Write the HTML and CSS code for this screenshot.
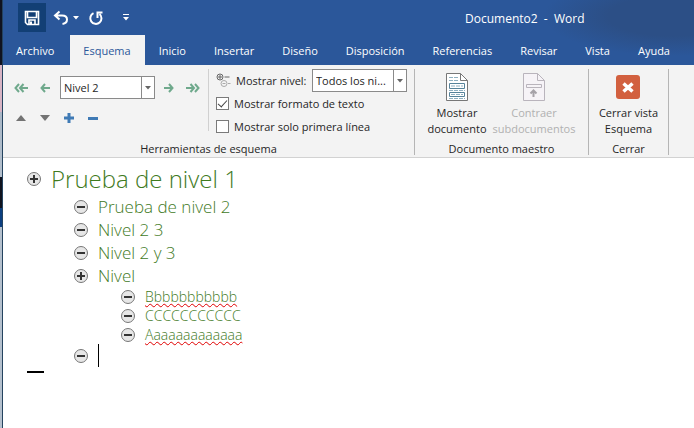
FILE: index.html
```html
<!DOCTYPE html>
<html lang="es">
<head>
	<meta charset="UTF-8">
	<meta name="viewport" content="width=device-width, initial-scale=1.0">
	<title>Documento2 - Word</title>
	<link rel="stylesheet" href="styles.css">
</head>
<body>

	<div class="escritorio"></div>

	<div class="ventana">
		<header class="cabecera">
			<div class="barraTitulo">
				<div class="accesoRapido">
					<button type="button" class="guardar" aria-label="Guardar">
						<svg width="16" height="16" viewBox="0 0 16 16"><path d="M1.5 1.5h13v13h-11l-2-2z M3.5 2v5.500h9V2 M5 14v-4h6v4" fill="none" stroke="#fff" stroke-width="1.6"/><path d="M6 11.500h2V14H6z" fill="#fff"/></svg>
					</button>
					<button type="button" class="deshacer" aria-label="Deshacer">
						<svg width="16" height="16" viewBox="0 0 16 16"><path d="M6.500 1.500L2 5.500l4.500 4M2.500 5.500h6.500c3 0 5 1.500 5 4 0 2.300-1.600 4-4.500 4.500" fill="none" stroke="#fff" stroke-width="2"/></svg>
						<svg width="6" height="4" viewBox="0 0 6 4"><path d="M0 0h6L3 3.500z" fill="#fff"/></svg>
					</button>
					<button type="button" class="repetir" aria-label="Repetir">
						<svg width="16" height="16" viewBox="0 0 16 16"><path d="M5.500 3.200A5.600 5.600 0 1 0 11.500 4M9.500 8V2.500h5" fill="none" stroke="#fff" stroke-width="2"/></svg>
					</button>
					<button type="button" class="personalizar" aria-label="Personalizar barra">
						<svg width="6" height="7" viewBox="0 0 6 7"><path d="M0 0h6v1H0zM0 3h6L3 6.500z" fill="#fff"/></svg>
					</button>
				</div>
				<span class="titulo">Documento2&nbsp; -&nbsp; Word</span>
			</div>
			<nav class="pestanas">
				<a href="#archivo" class="archivo">Archivo</a>
				<a href="#esquema" class="activa">Esquema</a>
				<a href="#inicio">Inicio</a>
				<a href="#insertar">Insertar</a>
				<a href="#diseno">Diseño</a>
				<a href="#disposicion">Disposición</a>
				<a href="#referencias">Referencias</a>
				<a href="#revisar">Revisar</a>
				<a href="#vista">Vista</a>
				<a href="#ayuda">Ayuda</a>
			</nav>
		</header>

		<section class="cinta">
			<div class="grupo herramientas">
				<div class="grupoCuerpo">
					<div class="niveles">
						<div class="fila filaNivel">
							<button type="button" aria-label="Aumentar a Título 1">
								<svg width="14" height="10" viewBox="0 0 14 10"><path d="M5 1L1.500 5 5 9M9.500 1L6 5l3.500 4M6 5h8" fill="none" stroke="#6fa98c" stroke-width="2"/></svg>
							</button>
							<button type="button" aria-label="Aumentar nivel">
								<svg width="10" height="10" viewBox="0 0 10 10"><path d="M5 1L1.500 5 5 9M2 5h8" fill="none" stroke="#6fa98c" stroke-width="2"/></svg>
							</button>
							<span class="lista listaNivel">
								<select aria-label="Nivel de esquema">
									<option>Nivel 2</option>
								</select>
								<svg class="flecha" width="6" height="4" viewBox="0 0 6 4"><path d="M0 0h6L3 3.500z" fill="#666"/></svg>
							</span>
							<button type="button" aria-label="Disminuir nivel">
								<svg width="10" height="10" viewBox="0 0 10 10"><path d="M5 1l3.500 4L5 9M8 5H0" fill="none" stroke="#6fa98c" stroke-width="2"/></svg>
							</button>
							<button type="button" aria-label="Disminuir a texto">
								<svg width="14" height="10" viewBox="0 0 14 10"><path d="M4.500 1L8 5 4.500 9M9 1l3.500 4L9 9M8 5H0" fill="none" stroke="#6fa98c" stroke-width="2"/></svg>
							</button>
						</div>
						<div class="fila">
							<button type="button" aria-label="Subir">
								<svg width="10" height="6" viewBox="0 0 10 6"><path d="M0 6h10L5 0z" fill="#737373"/></svg>
							</button>
							<button type="button" aria-label="Bajar">
								<svg width="10" height="6" viewBox="0 0 10 6"><path d="M0 0h10L5 6z" fill="#737373"/></svg>
							</button>
							<button type="button" aria-label="Expandir">
								<svg width="10" height="10" viewBox="0 0 10 10"><path d="M5 0v10M0 5h10" stroke="#3f7ab5" stroke-width="3"/></svg>
							</button>
							<button type="button" aria-label="Contraer">
								<svg width="10" height="10" viewBox="0 0 10 10"><path d="M0 5.500h10" stroke="#3f7ab5" stroke-width="3"/></svg>
							</button>
						</div>
					</div>
					<div class="opciones">
						<div class="opcion">
							<svg width="15" height="15" viewBox="0 0 15 15"><g fill="none" stroke="#666"><circle cx="4" cy="4" r="3"/><path d="M4 2v4M2 4h4M8.500 4h5"/><g stroke="#aaa"><circle cx="8" cy="10.500" r="3"/><path d="M6.500 10.500h3M12 10.500h2.500"/></g></g></svg>
							<label for="mostrarNivel">Mostrar nivel:</label>
							<span class="lista listaMostrar">
								<select id="mostrarNivel">
									<option>Todos los ni...</option>
								</select>
								<svg class="flecha" width="6" height="4" viewBox="0 0 6 4"><path d="M0 0h6L3 3.500z" fill="#666"/></svg>
							</span>
						</div>
						<div class="opcion">
							<input type="checkbox" id="formato" checked>
							<label for="formato">Mostrar formato de texto</label>
						</div>
						<div class="opcion">
							<input type="checkbox" id="primera">
							<label for="primera">Mostrar solo primera línea</label>
						</div>
					</div>
				</div>
				<div class="grupoNombre">Herramientas de esquema</div>
			</div>

			<div class="grupo maestro">
				<div class="grupoCuerpo">
					<button type="button" class="grande">
						<svg width="22" height="28" viewBox="0 0 22 28"><path d="M.5.500h14l7 7v20H.500z" fill="#fff" stroke="#777"/><path d="M14.500.500v7h7" fill="none" stroke="#777"/><g fill="none" stroke="#56839a"><path d="M3.500 10.500h15v5h-15zM3.500 19.500h15v4h-15z"/><path d="M3 4.500h9M3 7.500h9M3 17.500h16M3 25.500h16M5 13h12M5 21.500h12" stroke-dasharray="4 1" stroke="#8fb0c0"/></g></svg>
						<span>Mostrar<br>documento</span>
					</button>
					<button type="button" class="grande" disabled>
						<svg width="22" height="28" viewBox="0 0 22 28"><g fill="none" stroke="#b9b4bc"><path d="M.5.500h14l7 7v20H.500z" fill="#f6f3f7"/><path d="M14.500.500v7h7M3.500 11.500h15v3h-15z"/><path d="M10.500 24v-6M7.500 20.500l3-3 3 3" stroke="#a6a2a8" stroke-width="2"/></g></svg>
						<span>Contraer<br>subdocumentos</span>
					</button>
				</div>
				<div class="grupoNombre">Documento maestro</div>
			</div>

			<div class="grupo cerrar">
				<div class="grupoCuerpo">
					<button type="button" class="grande">
						<svg width="24" height="28" viewBox="0 0 24 28"><rect y="2" width="24" height="24" rx="3" fill="#d2603f"/><path d="M7.500 10.500l9 8M16.500 10.500l-9 8" stroke="#fff" stroke-width="3.500"/></svg>
						<span>Cerrar vista<br>Esquema</span>
					</button>
				</div>
				<div class="grupoNombre">Cerrar</div>
			</div>
		</section>

		<main class="documento">
			<ul class="nivel1">
				<li>
					<div class="linea">
						<svg class="marca" viewBox="0 0 14 14"><circle cx="7" cy="7" r="6.500"/><path d="M7 3v8M3 7h8"/></svg>
						<span>Prueba de nivel 1</span>
					</div>
					<ul class="nivel2">
						<li>
							<div class="linea">
								<svg class="marca" viewBox="0 0 14 14"><circle cx="7" cy="7" r="6.500"/><path d="M3 7h8"/></svg>
								<span>Prueba de nivel 2</span>
							</div>
						</li>
						<li>
							<div class="linea">
								<svg class="marca" viewBox="0 0 14 14"><circle cx="7" cy="7" r="6.500"/><path d="M3 7h8"/></svg>
								<span>Nivel 2 3</span>
							</div>
						</li>
						<li>
							<div class="linea">
								<svg class="marca" viewBox="0 0 14 14"><circle cx="7" cy="7" r="6.500"/><path d="M3 7h8"/></svg>
								<span>Nivel 2 y 3</span>
							</div>
						</li>
						<li>
							<div class="linea">
								<svg class="marca" viewBox="0 0 14 14"><circle cx="7" cy="7" r="6.500"/><path d="M7 3v8M3 7h8"/></svg>
								<span>Nivel</span>
							</div>
							<ul class="nivel3">
								<li>
									<div class="linea">
										<svg class="marca" viewBox="0 0 14 14"><circle cx="7" cy="7" r="6.500"/><path d="M3 7h8"/></svg>
										<span class="error">Bbbbbbbbbbb</span>
									</div>
								</li>
								<li>
									<div class="linea">
										<svg class="marca" viewBox="0 0 14 14"><circle cx="7" cy="7" r="6.500"/><path d="M3 7h8"/></svg>
										<span>CCCCCCCCCCC</span>
									</div>
								</li>
								<li>
									<div class="linea">
										<svg class="marca" viewBox="0 0 14 14"><circle cx="7" cy="7" r="6.500"/><path d="M3 7h8"/></svg>
										<span class="error">Aaaaaaaaaaaaa</span>
									</div>
								</li>
							</ul>
						</li>
						<li>
							<div class="linea">
								<svg class="marca" viewBox="0 0 14 14"><circle cx="7" cy="7" r="6.500"/><path d="M3 7h8"/></svg>
								<span class="cursor"></span>
							</div>
						</li>
					</ul>
				</li>
			</ul>
			<div class="finDocumento"></div>
		</main>
	</div>

</body>
</html>
```
FILE: styles.css
```css
*{
	box-sizing: border-box;
}

body{
	margin: 0;
	min-height: 100vh;
	display: flex;
	font-family: "Open Sans", "Noto Sans", sans-serif;
	font-size: 11px;
	color: #262626;
	background: #fff;
}

button{
	margin: 0;
	padding: 0;
	border: none;
	background: none;
	font: inherit;
	color: inherit;
	display: flex;
	align-items: center;
	justify-content: center;
}

ul{
	list-style: none;
	margin: 0;
	padding: 0;
}

/* franja del escritorio a la izquierda de la ventana */
.escritorio{
	width: 3px;
	border-right: 1px solid #24435f;
	background: linear-gradient(#10131f 65px, #d8b4c4 65px, #d8b4c4 112px, #a9b7c6 112px, #b4c0cd 177px, #10131f 177px, #10131f 208px, #0c3f80 208px, #0c3f80 227px, #b4c0cd 227px);
}

.ventana{
	flex: 1;
	min-width: 0;
	display: flex;
	flex-direction: column;
}

.cabecera{
	background: radial-gradient(ellipse 130px 40px at 97% 16px, #2c4f86 50%, #2b579a 100%) #2b579a;
	color: #fff;
}

.barraTitulo{
	height: 35px;
	padding-left: 15px;
	display: flex;
	align-items: center;
}

.accesoRapido{
	width: 447px;
	display: flex;
	align-items: center;
}

.guardar{
	width: 28px;
	height: 29px;
	background: #123f75;
}

.deshacer{
	width: 40px;
	gap: 4px;
}

.repetir{
	width: 20px;
}

.personalizar{
	width: 40px;
}

.titulo{
	font-size: 12px;
	line-height: 16px;
	padding-top: 3px;
}

.pestanas{
	display: flex;
	height: 30px;
	line-height: 32px;
}

.pestanas a{
	padding: 0 14px;
	color: #fff;
	text-decoration: none;
}

.pestanas .activa{
	padding: 0 14px 0 13px;
	background: #f3f3f3;
	color: #2b579a;
}

.pestanas .archivo{
	padding: 0 16px 0 13px;
}

.cinta{
	display: flex;
	height: 93px;
	padding-top: 4px;
	background: #f3f3f3;
	border-bottom: 1px solid #d2d2d2;
}

.grupo{
	display: flex;
	flex-direction: column;
	height: 86px;
	border-right: 1px solid #b5b5b5;
}

.herramientas{
	width: 412px;
}

.maestro{
	width: 174px;
}

.cerrar{
	width: 80px;
}

.grupoCuerpo{
	flex: 1;
	display: flex;
	justify-content: center;
}

.grupoNombre{
	line-height: 12px;
	text-align: center;
}

.niveles{
	width: 206px;
	height: 62px;
	padding: 7px 0 0 6px;
	border-right: 1px solid #d0d0d0;
}

.fila{
	display: flex;
	align-items: center;
}

.fila button{
	width: 24px;
	height: 24px;
}

.filaNivel{
	height: 23px;
	margin-bottom: 7px;
}

.lista{
	position: relative;
	display: flex;
}

.lista select{
	appearance: none;
	width: 100%;
	margin: 0;
	padding: 0 14px 0 3px;
	border: 1px solid #8a8a8a;
	border-radius: 0;
	background: linear-gradient(#8a8a8a, #8a8a8a) right 12px top / 1px 100% no-repeat #fff;
	font: inherit;
	color: #262626;
}

.flecha{
	position: absolute;
	right: 4px;
	top: 10px;
}

.listaNivel{
	width: 95px;
	height: 23px;
	margin: 0 2px 0 3px;
}

.listaMostrar{
	width: 95px;
	height: 23px;
	margin-left: auto;
}

.opciones{
	flex: 1;
	padding: 0 7px;
}

.opcion{
	display: flex;
	align-items: center;
	gap: 5px;
	height: 23px;
}

.opcion input{
	appearance: none;
	width: 13px;
	height: 13px;
	margin: 0;
	border: 1px solid #7a7a7a;
	background: #fff;
}

.opcion input:checked::before{
	content: "";
	display: block;
	width: 8px;
	height: 4px;
	margin: 2px 0 0 1px;
	border-left: 1px solid #444;
	border-bottom: 1px solid #444;
	transform: rotate(-48deg);
}

.grande{
	flex-direction: column;
	justify-content: flex-start;
	gap: 4px;
	padding: 4px 3px 0;
	line-height: 16px;
}

.grande:disabled{
	color: #b1b1b1;
}

.documento{
	flex: 1;
	padding: 5px 24px 0;
	background: #fff;
	color: #3f7a1e;
	font-weight: 300;
}

.linea{
	display: flex;
	align-items: center;
	gap: 10px;
}

.marca{
	width: 14px;
	height: 14px;
	flex: none;
	fill: #e6e6e6;
	stroke: #777;
}

.marca path{
	stroke: #333;
	stroke-width: 2;
}

.nivel1{
	font-size: 24px;
	line-height: 32px;
}

.nivel2{
	padding-left: 47px;
	font-size: 17px;
	line-height: 23px;
}

.nivel3{
	padding-left: 47px;
	font-size: 14px;
	line-height: 19px;
}

.error{
	text-decoration: underline wavy #e00000 1px;
	text-decoration-skip-ink: none;
	text-underline-offset: 1px;
}

.cursor{
	width: 1px;
	height: 23px;
	background: #000;
}

.finDocumento{
	width: 17px;
	height: 2px;
	margin-top: 4px;
	background: #000;
}
```
